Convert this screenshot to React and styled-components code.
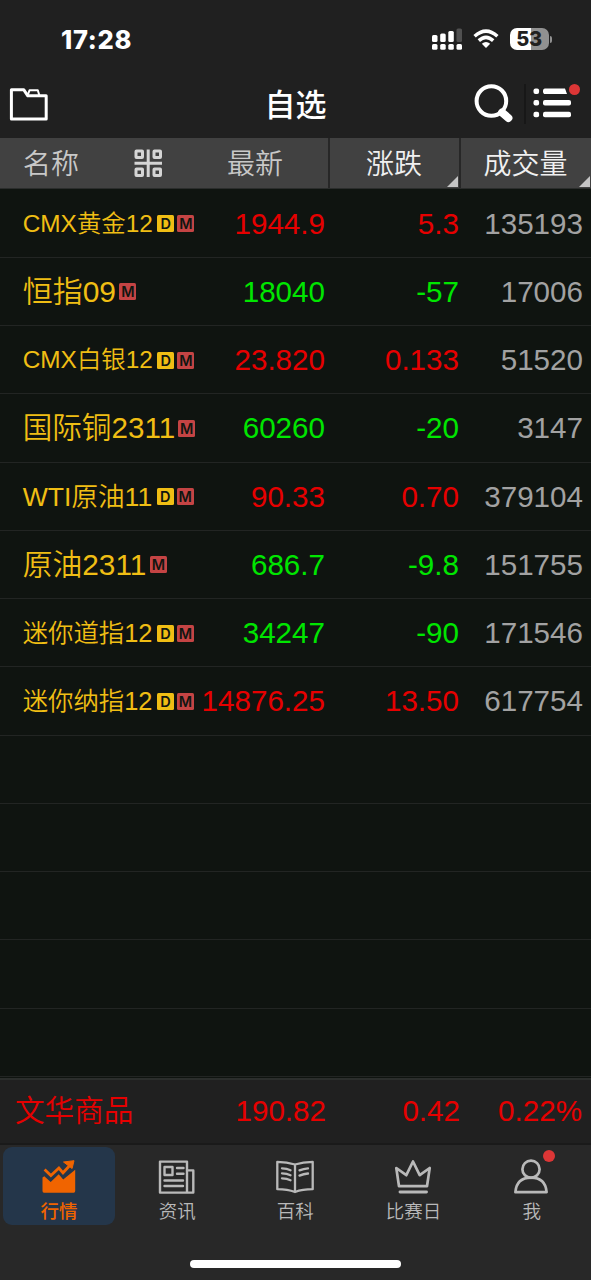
import React from 'react';
import styled, { createGlobalStyle } from 'styled-components';

const GlobalStyle = createGlobalStyle`
  * { box-sizing: border-box; }
  body {
    margin: 0;
    background: #282828;
    font-family: "Liberation Sans", "Noto Sans CJK SC", sans-serif;
    -webkit-font-smoothing: antialiased;
  }
`;

const Screen = styled.div`
  width: 591px;
  height: 1280px;
  display: flex;
  flex-direction: column;
  overflow: hidden;
  background: #202020;
`;

const StatusBar = styled.div`
  height: 78px;
  display: flex;
  align-items: center;
  padding: 0 39px 0 61px;
`;

const Clock = styled.div`
  flex: 1;
  padding-top: 2px;
  font: 800 25.5px/30px Inter, sans-serif;
  letter-spacing: 0.7px;
  color: #fff;
`;

const StatusIcons = styled.div`
  display: flex;
  align-items: center;
  gap: 11px;
  svg { display: block; }
`;

const BatteryWrap = styled.div`
  display: flex;
  align-items: center;
  gap: 1px;
`;

const Battery = styled.div`
  width: 39px;
  height: 22px;
  border-radius: 7px;
  background: linear-gradient(90deg, #fff 53%, #919191 53%);
  font: 800 20px/23px Inter, sans-serif;
  letter-spacing: -0.4px;
  padding-right: 1px;
  text-align: center;
  color: #202020;
`;

const BatteryTip = styled.div`
  width: 2px;
  height: 7px;
  border-radius: 0 3px 3px 0;
  background: #919191;
`;

const NavBar = styled.div`
  height: 60px;
  display: grid;
  grid-template-columns: 1fr auto 1fr;
  align-items: center;
  padding: 0 19px 9px 9px;
  svg { display: block; }
`;

const Title = styled.h1`
  margin: 0 -10px 2px 0;
  font: 500 31px/40px "Noto Sans CJK SC", sans-serif;
  color: #fff;
`;

const Actions = styled.div`
  display: flex;
  justify-content: flex-end;
  align-items: center;
`;

const ActionDivider = styled.div`
  width: 2px;
  height: 40px;
  margin: 0 7px 0 11px;
  background: #171717;
`;

const MenuButton = styled.div`
  position: relative;
`;

const Dot = styled.span`
  position: absolute;
  top: ${(p) => p.$top}px;
  right: ${(p) => p.$right}px;
  width: ${(p) => p.$size}px;
  height: ${(p) => p.$size}px;
  border-radius: 50%;
  background: #dc3636;
`;

const TableHead = styled.div`
  height: 51px;
  display: grid;
  grid-template-columns: 328px 129px 1fr;
  column-gap: 2px;
  background: #272727;
  border-bottom: 1px solid #2b2d2c;
`;

const HeadCell = styled.div`
  position: relative;
  display: flex;
  align-items: center;
  justify-content: ${(p) => (p.$first ? 'flex-start' : 'center')};
  padding: 3px 1px 0 ${(p) => (p.$first ? 23 : 0)}px;
  font-size: 28px;
  font-weight: 350;
  line-height: 47px;
  color: ${(p) => (p.$first ? '#c8c8c8' : '#f0f0f0')};
  background: #414141;
  svg { display: block; }
`;

const GridIcon = styled.svg`
  margin: 0 64px 2px 55px;
`;

const SortMark = styled.span`
  position: absolute;
  right: 1px;
  bottom: 1px;
  border-left: 11px solid transparent;
  border-bottom: 11px solid #c5c5c5;
`;

const Table = styled.div`
  height: 889px;
  padding-top: 0.5px;
  background: #0f1410;
`;

const Row = styled.div`
  height: 68.25px;
  display: grid;
  grid-template-columns: 177px 126px 134px 124px;
  align-items: center;
  padding: 1.2px 0 0 22px;
  border-bottom: 1px solid #222523;
`;

const Name = styled.div`
  display: flex;
  align-items: center;
  white-space: nowrap;
  padding-left: 0.7px;
  font-size: ${(p) => p.$size}px;
  font-weight: 350;
  line-height: 40px;
  color: #f0be14;
`;

const Tags = styled.div`
  display: flex;
  gap: 3px;
  margin-left: ${(p) => p.$gap}px;
`;

const Tag = styled.span`
  width: 17px;
  height: 17px;
  border-radius: 1.5px;
  background: ${(p) => (p.$kind === 'D' ? '#f0be14' : '#c44444')};
  font: 600 14.5px/17px Inter, sans-serif;
  text-align: center;
  color: #101510;
`;

const palette = { up: '#e60000', down: '#00e600', flat: '#a2a2a2' };

const Value = styled.div`
  text-align: right;
  font-size: 29.6px;
  line-height: 40px;
  white-space: nowrap;
  font-kerning: none;
  color: ${(p) => palette[p.$tone]};
`;

const IndexBar = styled.div`
  height: 67px;
  display: grid;
  grid-template-columns: 180px 131px 134px 122px;
  align-items: center;
  padding: 0 0 2px 15px;
  border-top: 2px solid #2b2e2c;
  border-bottom: 2px solid #1a1a1a;
  background: #202020;
`;

const IndexName = styled.div`
  font-size: 29.6px;
  font-weight: 350;
  line-height: 40px;
  color: #e60000;
`;

const TabBar = styled.nav`
  height: 82px;
  flex: none;
  display: grid;
  grid-template-columns: repeat(5, 112px);
  column-gap: 6.2px;
  padding: 2px 3px;
  background: #282828;
`;

const Tab = styled.div`
  position: relative;
  height: 78px;
  display: flex;
  flex-direction: column;
  align-items: center;
  padding-top: 12px;
  border-radius: 9px;
  background: ${(p) => (p.$active ? '#24364a' : 'transparent')};
  color: ${(p) => (p.$active ? '#f06400' : '#b9b9b9')};
  font-size: 18.5px;
  font-weight: ${(p) => (p.$active ? 500 : 350)};
  line-height: 26px;
  svg { display: block; flex: none; margin: 0 1px 4px 0; }
`;

const HomeArea = styled.div`
  flex: 1;
  display: flex;
  justify-content: center;
  padding-top: 33px;
  background: #282828;
`;

const HomeIndicator = styled.div`
  width: 211px;
  height: 8px;
  border-radius: 4px;
  background: #fff;
`;

const SignalIcon = () => (
  <svg width="30" height="22" viewBox="0 0 30 22" fill="#fff">
    <rect x="0" y="7" width="5.5" height="7" rx="1.5" />
    <rect x="8.2" y="5.5" width="5.5" height="8.5" rx="1.5" />
    <rect x="16.3" y="3" width="5.5" height="11" rx="1.5" />
    <rect x="24.5" y="0.5" width="5.5" height="13.5" rx="1.5" fill="#505050" />
    <rect x="0" y="16" width="5.5" height="5.8" rx="1.5" />
    <rect x="8.2" y="16" width="5.5" height="5.8" rx="1.5" />
    <rect x="16.3" y="16" width="5.5" height="5.8" rx="1.5" />
    <rect x="24.5" y="16" width="5.5" height="5.8" rx="1.5" />
  </svg>
);

const WifiIcon = () => (
  <svg width="26" height="20" viewBox="0 0 26 20" fill="none" stroke="#fff" strokeWidth="3.5">
    <path d="M1.6 7.2Q13-3 24.4 7.2" />
    <path d="M5.8 11.6Q13 5 20.2 11.6" />
    <path d="M8.8 14.7Q13 11.1 17.2 14.7L13 19Z" fill="#fff" stroke="none" />
  </svg>
);

const FolderIcon = () => (
  <svg width="40" height="34" viewBox="0 0 40 34" fill="none" stroke="#fff" strokeWidth="3" strokeLinejoin="round">
    <path d="M2.4 2.7H14.7L18.8 8.8H37.2V32H2.4Z" />
    <path d="M18.8 7.8L20.5 3.3H28.8L30.3 8.3" strokeWidth="2" />
  </svg>
);

const SearchIcon = () => (
  <svg width="39" height="40" viewBox="0 0 39 40" fill="none" stroke="#fff">
    <circle cx="17.4" cy="17" r="14.8" strokeWidth="4" />
    <path d="M28 28.5L34.4 34" strokeWidth="8" strokeLinecap="round" />
  </svg>
);

const ListIcon = () => (
  <svg width="39" height="34" viewBox="0 0 39 34" fill="#fff">
    <rect x="0.5" y="1.5" width="5.6" height="5.6" rx="2" />
    <rect x="0.5" y="13" width="5.6" height="5.6" rx="2" />
    <rect x="0.5" y="24.7" width="5.6" height="5.6" rx="2" />
    <path d="M12 1.5H32L34 7.1H12Q10 7.1 10 4.3T12 1.5Z" />
    <rect x="10" y="13" width="28" height="5.6" rx="2" />
    <rect x="10" y="24.7" width="28" height="5.6" rx="2" />
  </svg>
);

const LayoutIcon = () => (
  <GridIcon width="29" height="29" viewBox="0 0 29 29" fill="none" stroke="#d5d5d5" strokeWidth="3">
    <rect x="2" y="2" width="6.5" height="6.5" rx=".5" />
    <rect x="20" y="2" width="6.5" height="6.5" rx=".5" />
    <rect x="2" y="20" width="6.5" height="6.5" rx=".5" />
    <rect x="20" y="20" width="6.5" height="6.5" rx=".5" />
    <path d="M14.2 .5V28M.5 14.2H28" />
  </GridIcon>
);

const ChartIcon = () => (
  <svg width="36" height="36" viewBox="0 0 36 36" fill="#f06400">
    <path d="M1.5 18.5L3.3 17.3L9.7 23L17.7 15.2L22.2 20.4L34.2 10.7V32Q34.2 33.7 32.7 33.7H3Q1.5 33.7 1.5 32Z" />
    <path d="M3.6 10.5L9.9 16.5L17.9 9L22 13.8L29 6.2" fill="none" stroke="#f06400" strokeWidth="2.8" />
    <path d="M22.5 3L33 1.7L31.1 9.5Z" stroke="#f06400" strokeLinejoin="round" />
  </svg>
);

const NewsIcon = () => (
  <svg width="38" height="36" viewBox="0 0 38 36" fill="none" stroke="currentColor" strokeWidth="2.4" strokeLinecap="round" strokeLinejoin="round">
    <path d="M2 2.6H29V33.6H2ZM29 11.4H35.3V33.6H29" />
    <rect x="6.5" y="8" width="8" height="8" />
    <path d="M19 9H25.5M19 14.8H25.5M6.5 21.5H25M6.5 27H25" />
  </svg>
);

const BookIcon = () => (
  <svg width="40" height="36" viewBox="0 0 40 36" fill="none" stroke="currentColor" strokeWidth="2.3" strokeLinecap="round" strokeLinejoin="round">
    <path d="M20 5.5Q12 2.8 2.3 2.8V30.2Q12.5 30.4 20 33Q27.5 30.2 37.7 30.2V2.8Q28 2.8 20 5.5V33" />
    <path d="M7 9.4Q12 9.6 15.5 11.2M7 14.4Q12 14.6 15.5 16.2M7 19.4Q12 19.6 15.5 21.2M24.5 11.4Q28.5 9.6 33 9.3M24.5 16.6Q28.5 14.8 33 14.5" />
  </svg>
);

const CrownIcon = () => (
  <svg width="38" height="36" viewBox="0 0 38 36" fill="none" stroke="currentColor" strokeWidth="2.7" strokeLinecap="round" strokeLinejoin="round">
    <path d="M2.3 9L12.3 16.2L19 2.5L25.7 16.2L35.7 9L33 27.2H5Z" />
    <path d="M6 33H32.5" strokeWidth="2.9" />
  </svg>
);

const PersonIcon = () => (
  <svg width="36" height="36" viewBox="0 0 36 36" fill="none" stroke="currentColor" strokeWidth="2.7" strokeLinejoin="round">
    <circle cx="18" cy="10.2" r="8.6" />
    <path d="M2.4 33.2Q3.5 18.6 18 18.6T33.6 33.2Z" />
  </svg>
);

const quotes = [
  { name: 'CMX黄金12', size: 24.4, tags: 'DM', gap: 4.5, last: '1944.9', change: '5.3', volume: '135193', tone: 'up' },
  { name: '恒指09', size: 30, tags: 'M', gap: 3.3, last: '18040', change: '-57', volume: '17006', tone: 'down' },
  { name: 'CMX白银12', size: 24.4, tags: 'DM', gap: 4.5, last: '23.820', change: '0.133', volume: '51520', tone: 'up' },
  { name: '国际铜2311', size: 29.6, tags: 'M', gap: 3, last: '60260', change: '-20', volume: '3147', tone: 'down' },
  { name: 'WTI原油11', size: 26.6, tags: 'DM', gap: 4.5, last: '90.33', change: '0.70', volume: '379104', tone: 'up' },
  { name: '原油2311', size: 29.8, tags: 'M', gap: 3.5, last: '686.7', change: '-9.8', volume: '151755', tone: 'down' },
  { name: '迷你道指12', size: 25.4, tags: 'DM', gap: 4.5, last: '34247', change: '-90', volume: '171546', tone: 'down' },
  { name: '迷你纳指12', size: 25.4, tags: 'DM', gap: 4.5, last: '14876.25', change: '13.50', volume: '617754', tone: 'up' },
];

const tabs = [
  { label: '行情', Icon: ChartIcon, active: true },
  { label: '资讯', Icon: NewsIcon },
  { label: '百科', Icon: BookIcon },
  { label: '比赛日', Icon: CrownIcon },
  { label: '我', Icon: PersonIcon, dot: true },
];

const emptyRows = [0, 1, 2, 3, 4];

export default function App() {
  return (
    <Screen>
      <GlobalStyle />
      <StatusBar>
        <Clock>17:28</Clock>
        <StatusIcons>
          <SignalIcon />
          <WifiIcon />
          <BatteryWrap>
            <Battery>53</Battery>
            <BatteryTip />
          </BatteryWrap>
        </StatusIcons>
      </StatusBar>
      <NavBar>
        <FolderIcon />
        <Title>自选</Title>
        <Actions>
          <SearchIcon />
          <ActionDivider />
          <MenuButton>
            <ListIcon />
            <Dot $top={-3} $right={-8} $size={11} />
          </MenuButton>
        </Actions>
      </NavBar>
      <TableHead>
        <HeadCell $first>
          名称
          <LayoutIcon />
          最新
        </HeadCell>
        <HeadCell>
          涨跌
          <SortMark />
        </HeadCell>
        <HeadCell>
          成交量
          <SortMark />
        </HeadCell>
      </TableHead>
      <Table>
        {quotes.map((q) => (
          <Row key={q.name}>
            <Name $size={q.size}>
              {q.name}
              <Tags $gap={q.gap}>
                {q.tags.split('').map((t) => (
                  <Tag key={t} $kind={t}>{t}</Tag>
                ))}
              </Tags>
            </Name>
            <Value $tone={q.tone}>{q.last}</Value>
            <Value $tone={q.tone}>{q.change}</Value>
            <Value $tone="flat">{q.volume}</Value>
          </Row>
        ))}
        {emptyRows.map((n) => (
          <Row key={n} />
        ))}
      </Table>
      <IndexBar>
        <IndexName>文华商品</IndexName>
        <Value $tone="up">190.82</Value>
        <Value $tone="up">0.42</Value>
        <Value $tone="up">0.22%</Value>
      </IndexBar>
      <TabBar>
        {tabs.map(({ label, Icon, active, dot }) => (
          <Tab key={label} $active={active}>
            <Icon />
            {label}
            {dot && <Dot $top={3} $right={33} $size={12} />}
          </Tab>
        ))}
      </TabBar>
      <HomeArea>
        <HomeIndicator />
      </HomeArea>
    </Screen>
  );
}
